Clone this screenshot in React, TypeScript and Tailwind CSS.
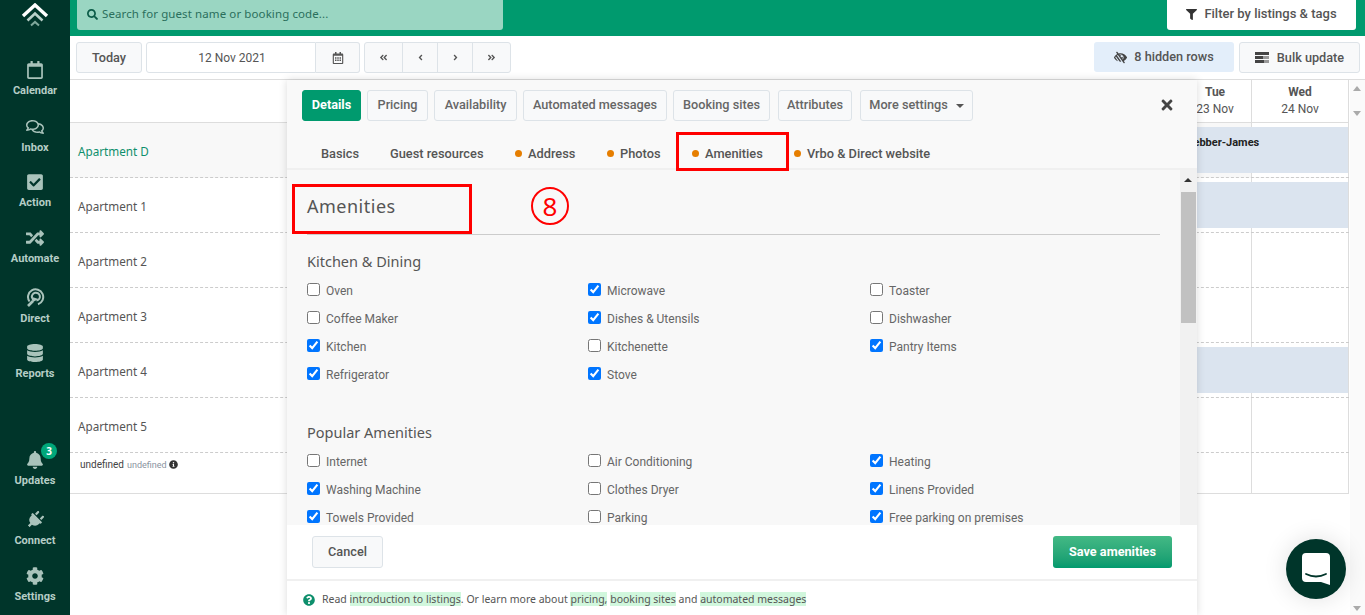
import {
  FaAngleDoubleLeft,
  FaAngleDoubleRight,
  FaAngleLeft,
  FaAngleRight,
  FaBell,
  FaCheckSquare,
  FaCog,
  FaDatabase,
  FaFilter,
  FaInfoCircle,
  FaLowVision,
  FaPlug,
  FaQuestionCircle,
  FaRandom,
  FaRegCalendar,
  FaRegCalendarAlt,
  FaRegComments,
  FaSearch,
  FaTimes,
} from 'react-icons/fa';

const plex = "font-['Noto_Sans',sans-serif]";
const roboto = "font-['Roboto',sans-serif]";

const DirectIcon = () => (
  <svg width="20" height="20" viewBox="0 0 20 20" fill="none" stroke="currentColor" strokeWidth="2">
    <path d="M4.5 14.5A7.6 7.6 0 1 1 13 17.2" />
    <path d="M7 10.5A4 4 0 1 1 11.5 13.6" />
    <path d="M3 19l5-5" strokeWidth="2.6" />
    <path d="M5.5 9.5l8 2.5-5.5 3z" fill="currentColor" stroke="none" />
  </svg>
);

const Logo = () => (
  <svg width="28" height="25" viewBox="0 0 28 25" fill="none">
    <path d="M2 13 14 2l12 11" stroke="white" strokeWidth="3.4" />
    <path d="M6.5 17.5 14 10.5l7.5 7" stroke="#b9d0c9" strokeWidth="2.6" />
    <path d="M10 22.5l4-3.6 4 3.6" stroke="#7fa79b" strokeWidth="2" />
  </svg>
);

const BulkIcon = () => (
  <svg width="14" height="11" viewBox="0 0 14 11" className="text-[#444]">
    <rect width="14" height="3" fill="currentColor" />
    <rect y="4" width="14" height="3" fill="#999" />
    <rect y="4" width="8" height="3" fill="currentColor" />
    <rect y="8" width="14" height="3" fill="currentColor" />
    <rect x="9" y="8" width="5" height="3" fill="#999" />
  </svg>
);

function NavItem({ icon, label, badge, className }: { icon: React.ReactNode; label: string; badge?: string; className?: string }) {
  return (
    <div className={`relative flex h-[38px] flex-col items-center ${className ?? ''}`}>
      <div className="flex h-[20px] items-center text-[18px] text-[#a9c3bb]">{icon}</div>
      {badge && (
        <span className="absolute left-[41px] top-[-7px] flex h-[16px] w-[16px] items-center justify-center rounded-full bg-[#00a77a] text-[10px] font-bold text-white">
          {badge}
        </span>
      )}
      <span className={`mt-[5px] text-[11px] leading-[14px] font-bold text-[#b5cdc6] ${roboto}`}>{label}</span>
    </div>
  );
}

function Sidebar() {
  return (
    <aside className="flex h-full w-[70px] shrink-0 flex-col bg-[#00352a]">
      <div className="flex h-[60px] justify-center pt-[3px]">
        <Logo />
      </div>
      <NavItem icon={<FaRegCalendar />} label="Calendar" className="mb-[19px]" />
      <NavItem icon={<FaRegComments />} label="Inbox" className="mb-[17px]" />
      <NavItem icon={<FaCheckSquare />} label="Action" className="mb-[18px]" />
      <NavItem icon={<FaRandom />} label="Automate" className="mb-[21px]" />
      <NavItem icon={<DirectIcon />} label="Direct" className="mb-[18px]" />
      <NavItem icon={<FaDatabase />} label="Reports" />
      <div className="flex-1" />
      <NavItem icon={<FaBell />} label="Updates" badge="3" className="mb-[22px]" />
      <NavItem icon={<FaPlug className="rotate-45" />} label="Connect" className="mb-[18px]" />
      <NavItem icon={<FaCog />} label="Settings" className="mb-[11px]" />
    </aside>
  );
}

const btn = `flex h-[31px] items-center justify-center rounded-[3px] border border-[#dde3e8] bg-[#f8f9fa] text-[12.7px] font-medium text-[#555] ${roboto}`;

function Toolbar() {
  return (
    <div className="flex h-[44px] shrink-0 items-start border-b border-[#ddd] bg-white pl-[6px] pr-[5px] pt-[6px]">
      <div className={`${btn} w-[66px] font-bold`}>Today</div>
      <div className={`ml-[4px] flex h-[31px] w-[170px] items-center justify-center rounded-l-[3px] border border-[#dde3e8] bg-white pl-[2px] text-[12px] text-[#555] ${roboto}`}>
        12 Nov 2021
      </div>
      <div className="flex h-[31px] w-[44px] items-center justify-center rounded-r-[3px] border border-l-0 border-[#dde3e8] bg-[#f8f9fa] text-[12px] text-[#555]">
        <FaRegCalendarAlt />
      </div>
      <div className="ml-[4px] flex h-[31px] w-[147px] rounded-[3px] border border-[#dde3e8] bg-[#f8f9fa] text-[9px] text-[#555]">
        <div className="flex w-[38px] items-center justify-center border-r border-[#dde3e8]"><FaAngleDoubleLeft /></div>
        <div className="flex w-[35px] items-center justify-center border-r border-[#dde3e8]"><FaAngleLeft /></div>
        <div className="flex w-[35px] items-center justify-center border-r border-[#dde3e8]"><FaAngleRight /></div>
        <div className="flex flex-1 items-center justify-center"><FaAngleDoubleRight /></div>
      </div>
      <div className="flex-1" />
      <div className={`flex h-[30px] w-[140px] items-center justify-center gap-[7px] rounded-[3px] bg-[#e3eefa] text-[12.7px] font-medium text-[#555] ${roboto}`}>
        <FaLowVision className="text-[13px] text-[#444]" />8 hidden rows
      </div>
      <div className={`${btn} ml-[5px] w-[121px] gap-[8px]`}>
        <BulkIcon />Bulk update
      </div>
    </div>
  );
}

const rowNames = ['Apartment D', 'Apartment 1', 'Apartment 2', 'Apartment 3', 'Apartment 4', 'Apartment 5'];
const bookings: Record<string, string> = { 'Apartment D': 'Webber-James', 'Apartment 1': ' ', 'Apartment 4': ' ' };

function Calendar() {
  return (
    <div className="relative flex-1 overflow-hidden bg-white">
      <div className="w-[1279px]">
        <div className="flex h-[43px] border-b border-[#ddd]">
          <div className="flex-1" />
          <div className={`flex w-[73px] flex-col items-center border-r border-[#ddd] pt-[4px] text-[12px] leading-[17px] text-[#555] ${roboto}`}>
            <b>Tue</b>
            <span>23 Nov</span>
          </div>
          <div className={`flex w-[97px] flex-col items-center border-r border-[#ddd] pt-[4px] text-[12px] leading-[17px] text-[#555] ${roboto}`}>
            <b>Wed</b>
            <span>24 Nov</span>
          </div>
        </div>
        {rowNames.map((name, i) => (
          <div key={name} className={`relative flex h-[55px] border-b border-dashed border-[#ccc] ${i === 0 ? 'bg-[#f8f8f8]' : ''}`}>
            <div className={`flex flex-1 items-center pl-[8px] pt-[3px] text-[11.7px] ${plex} ${i === 0 ? 'text-[#0e8f6c]' : 'text-[#555]'}`}>{name}</div>
            <div className="w-[73px] border-r border-[#ddd]" />
            <div className="w-[97px] border-r border-[#ddd] bg-white" />
            {bookings[name] && (
              <div className={`absolute left-[1030px] right-[1px] top-[4px] h-[46px] bg-[#dbe4ef] pl-[84px] pt-[8px] text-[11px] font-bold text-[#222] ${roboto}`}>
                {bookings[name]}
              </div>
            )}
          </div>
        ))}
        <div className="flex h-[41px] border-b border-[#ddd]">
          <div className={`flex flex-1 items-start pl-[10px] pt-[5px] text-[10px] leading-[14px] text-[#444] ${roboto}`}>
            undefined
            <span className="ml-[3px] text-[9px] text-[#8a93a0]">undefined</span>
            <FaInfoCircle className="ml-[2px] mt-[2px] text-[9px] text-[#333]" />
          </div>
          <div className="w-[73px] border-r border-[#ddd]" />
          <div className="w-[97px] border-r border-[#ddd]" />
        </div>
      </div>
    </div>
  );
}

const kitchen: [string, boolean][] = [
  ['Oven', false], ['Microwave', true], ['Toaster', false],
  ['Coffee Maker', false], ['Dishes & Utensils', true], ['Dishwasher', false],
  ['Kitchen', true], ['Kitchenette', false], ['Pantry Items', true],
  ['Refrigerator', true], ['Stove', true],
];

const popular: [string, boolean][] = [
  ['Internet', false], ['Air Conditioning', false], ['Heating', true],
  ['Washing Machine', true], ['Clothes Dryer', false], ['Linens Provided', true],
  ['Towels Provided', true], ['Parking', false], ['Free parking on premises', true],
];

function AmenityGrid({ items }: { items: [string, boolean][] }) {
  return (
    <div className="grid grid-cols-[281px_282px_1fr] auto-rows-[28px]">
      {items.map(([label, checked]) => (
        <label key={label} className={`flex items-center text-[12px] text-[#666] ${roboto}`}>
          <input type="checkbox" defaultChecked={checked} className="mb-[4px] mr-[6px] h-[13px] w-[13px]" />
          {label}
        </label>
      ))}
    </div>
  );
}

const tabBase = `flex h-[31px] items-center justify-center rounded-[3px] border pb-[1px] text-[12.7px] ${roboto}`;
const tabBtn = `${tabBase} border-[#dde3e8] bg-[#f8f9fa] font-medium text-[#666]`;
const Dot = () => <span className="h-[7px] w-[7px] rounded-full bg-[#e67e00]" />;
const subTab = `absolute top-[64px] flex items-center gap-[6px] text-[12.8px] font-medium text-[#555] ${roboto}`;

function Modal() {
  return (
    <div className="absolute left-[287px] top-[80px] flex h-[535px] w-[910px] flex-col bg-white shadow-[0_0_8px_rgba(0,0,0,0.15)]">
      <div className="relative h-[90px] shrink-0 border-b-2 border-[#f0f0f0] bg-[#f9f9f9]">
        <div className="flex gap-[6px] pl-[15px] pt-[10px]">
          <div className={`${tabBase} w-[59px] border-[#009a6e] bg-[#009a6e] font-bold text-white`}>Details</div>
          <div className={`${tabBtn} w-[61px]`}>Pricing</div>
          <div className={`${tabBtn} w-[83px]`}>Availability</div>
          <div className={`${tabBtn} w-[144px]`}>Automated messages</div>
          <div className={`${tabBtn} w-[97px]`}>Booking sites</div>
          <div className={`${tabBtn} ml-[2px] w-[74px]`}>Attributes</div>
          <div className={`${tabBtn} ml-[2px] w-[113px] gap-[8px]`}>
            More settings
            <span className="mt-[1px] h-0 w-0 border-x-[4px] border-t-[4px] border-x-transparent border-t-[#555]" />
          </div>
        </div>
        <FaTimes className="absolute left-[872px] top-[17px] text-[16px] text-[#444]" />
        <span className={`${subTab} left-[34px]`}>Basics</span>
        <span className={`${subTab} left-[103px]`}>Guest resources</span>
        <span className={`${subTab} left-[228px]`}><Dot />Address</span>
        <span className={`${subTab} left-[320px]`}><Dot />Photos</span>
        <span className={`${subTab} left-[405px] font-bold text-[#0e9a70]`}><Dot />Amenities</span>
        <span className={`${subTab} left-[507px]`}><Dot />Vrbo &amp; Direct website</span>
      </div>

      <div className="relative flex min-h-0 flex-1">
        <div className="min-w-0 flex-1 overflow-hidden bg-[#f8f8f8] pl-[20px] pr-[20px]">
          <h2 className={`flex h-[65px] items-center border-b border-[#ccc] pt-[8px] text-[18px] tracking-[0.5px] text-[#555] ${plex}`}>Amenities</h2>
          <h3 className={`mb-[6px] mt-[16px] text-[14.5px] leading-[20px] text-[#555] ${plex}`}>Kitchen &amp; Dining</h3>
          <AmenityGrid items={kitchen} />
          <h3 className={`mb-[6px] mt-[33px] text-[14.5px] leading-[20px] text-[#555] ${plex}`}>Popular Amenities</h3>
          <AmenityGrid items={popular} />
        </div>
        <div className="relative w-[17px] shrink-0 bg-[#f1f1f1]">
          <span className="absolute left-[4px] top-[8px] h-0 w-0 border-x-[4px] border-b-[4px] border-x-transparent border-b-[#333]" />
          <div className="absolute left-[1px] top-[22px] h-[131px] w-[15px] bg-[#c1c1c1]" />
        </div>
      </div>

      <div className="flex h-[56px] shrink-0 items-start justify-between border-b-2 border-[#f0f0f0] px-[25px] pt-[11px]">
        <div className={`flex h-[32px] w-[71px] items-center justify-center rounded-[3px] border border-[#dde3e8] bg-[#f8f9fa] text-[12.7px] font-medium text-[#555] ${roboto}`}>Cancel</div>
        <div className={`flex h-[32px] w-[119px] items-center justify-center rounded-[3px] bg-gradient-to-b from-[#43b985] to-[#009a6e] text-[12.7px] font-bold text-white ${roboto}`}>Save amenities</div>
      </div>

      <div className={`flex h-[34px] shrink-0 items-center gap-[7px] pt-[4px] pl-[16px] text-[10.5px] text-[#555] ${plex}`}>
        <FaQuestionCircle className="text-[12px] text-[#0e8f6c]" />
        <span className="whitespace-nowrap">
          Read <span className="bg-[#d1f7dd]">introduction to listings</span>. Or learn more about{' '}
          <span className="bg-[#d1f7dd]">pricing,</span> <span className="bg-[#d1f7dd]">booking sites</span> and{' '}
          <span className="bg-[#d1f7dd]">automated messages</span>
        </span>
      </div>

      {/* red annotations drawn on top of the screenshot */}
      <div className="absolute left-[389px] top-[52px] h-[39px] w-[113px] border-[3px] border-[#f00]" />
      <div className="absolute left-[5px] top-[104px] h-[50px] w-[180px] border-[3px] border-[#f00]" />
      <div className={`absolute left-[244px] top-[107px] flex h-[38px] w-[38px] items-center justify-center rounded-full border-2 border-[#f00] text-[26px] text-[#f00] ${plex}`}>8</div>
    </div>
  );
}

export default function App() {
  return (
    <div className="relative flex h-[615px] w-[1365px] overflow-hidden bg-white">
      <Sidebar />
      <div className="flex min-w-0 flex-1 flex-col">
        <div className="flex h-[36px] shrink-0 items-start justify-between bg-[#009a6e] pl-[7px] pr-[9px]">
          <div className={`flex h-[30px] w-[426px] items-center gap-[4px] rounded-b-[3px] bg-[#9ad6c2] pb-[2px] pl-[10px] text-[11.5px] tracking-[0.1px] text-[#2a6f5c] ${plex}`}>
            <FaSearch className="text-[11px] text-[#0b5c48]" />Search for guest name or booking code...
          </div>
          <div className={`flex h-[30px] w-[189px] items-center justify-center gap-[7px] rounded-b-[3px] bg-white pb-[2px] text-[13px] font-medium text-[#555] ${roboto}`}>
            <FaFilter className="text-[11px] text-[#333]" />Filter by listings &amp; tags
          </div>
        </div>
        <Toolbar />
        <div className="flex min-h-0 flex-1">
          <Calendar />
          <div className="relative w-[15px] shrink-0 bg-[#fafafa]">
            <span className="absolute left-[3px] top-[6px] h-0 w-0 border-x-[4px] border-b-[5px] border-x-transparent border-b-[#aaa]" />
            <span className="absolute left-[3px] top-[31px] h-0 w-0 border-x-[4px] border-t-[5px] border-x-transparent border-t-[#aaa]" />
            <span className="absolute bottom-[4px] left-[3px] h-0 w-0 border-x-[4px] border-t-[5px] border-x-transparent border-t-[#aaa]" />
          </div>
        </div>
      </div>
      <Modal />
      <div className="absolute left-[1286px] top-[539px] flex h-[60px] w-[60px] items-center justify-center rounded-full bg-[#00352a] shadow-[0_0_24px_rgba(0,0,0,0.12)]">
        <svg width="28" height="32" viewBox="0 0 28 32">
          <path d="M4 0h20a4 4 0 0 1 4 4v28l-9-3H4a4 4 0 0 1-4-4V4a4 4 0 0 1 4-4z" fill="white" />
          <path d="M4 21q10 5 20 0" fill="none" stroke="#00352a" strokeWidth="1.8" strokeLinecap="round" />
        </svg>
      </div>
    </div>
  );
}
